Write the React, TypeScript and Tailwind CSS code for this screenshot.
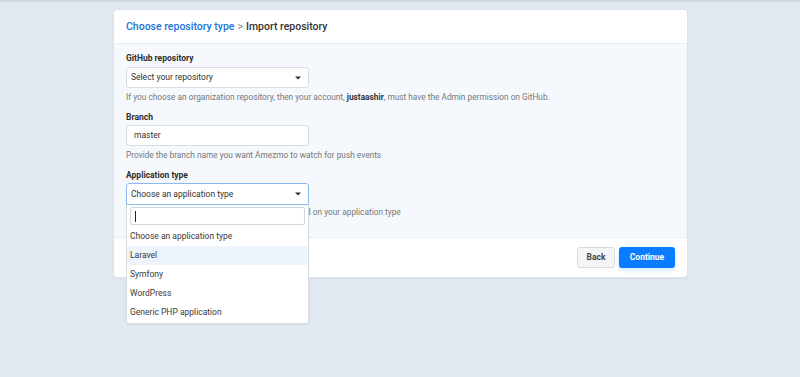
import { useState } from 'react';

const options = [
  'Choose an application type',
  'Laravel',
  'Symfony',
  'WordPress',
  'Generic PHP application',
];

function Caret() {
  return (
    <svg width="6" height="4" viewBox="0 0 6 4" className="shrink-0">
      <path d="M0 0.5h6L3 3.5z" fill="#333" />
    </svg>
  );
}

export default function App() {
  const [hovered] = useState('Laravel');

  return (
    <div className="min-h-[377px] bg-[#e2e8f0] font-['Roboto',sans-serif]">
      <div className="h-[2px] bg-[#d3d9e3]" />
      <div className="ml-[113px] mt-[7px] w-[575px] rounded-[4px] border border-[#dde3ea] bg-white shadow-[0_1px_2px_rgba(0,0,0,0.04)]">
        <div className="flex h-[34px] items-center border-b border-[#e8edf3] px-3 text-[10.5px]">
          <span className="font-medium text-[#1b73d9]">Choose repository type</span>
          <span className="mx-[3px] text-[#888]">&gt;</span>
          <span className="font-medium text-[#333]">Import repository</span>
        </div>

        <div className="bg-[#f5f9fd] px-3 pb-[19px] pt-[8px] text-[#333]">
          <label className="block text-[8.5px] font-bold leading-[12px] text-[#2d2d2d]">
            GitHub repository
          </label>
          <div className="mt-[3px] flex h-[21px] w-[183px] items-center justify-between rounded-[3px] border border-[#d8dde4] bg-white pl-[4px] pr-[7px] text-[8.5px] text-[#333]">
            <span>Select your repository</span>
            <Caret />
          </div>
          <p className="mt-[3px] text-[8.3px] leading-[12px] text-[#777]">
            If you choose an organization repository, then your account,{' '}
            <b className="text-[#333]">justaashir</b>, must have the Admin permission on GitHub.
          </p>

          <label className="mt-[8px] block text-[8.5px] font-bold leading-[12px] text-[#2d2d2d]">
            Branch
          </label>
          <div className="mt-[2px] flex h-[21px] w-[183px] items-center rounded-[3px] border border-[#d8dde4] bg-white pl-[7px] text-[8.5px] text-[#333]">
            master
          </div>
          <p className="mt-[3px] text-[8.3px] leading-[12px] text-[#777]">
            Provide the branch name you want Amezmo to watch for push events
          </p>

          <label className="mt-[8px] block text-[8.5px] font-bold leading-[12px] text-[#2d2d2d]">
            Application type
          </label>
          <div className="relative mt-[2px] w-[183px]">
            <div className="flex h-[22px] items-center justify-between rounded-t-[3px] border border-[#8db8ee] bg-white pl-[4px] pr-[7px] text-[8.5px] text-[#333]">
              <span>Choose an application type</span>
              <Caret />
            </div>
            <div className="absolute left-0 top-[22px] z-10 w-[183px] rounded-b-[3px] border border-t-0 border-[#d8dde4] bg-white pb-[1px] shadow-[0_1px_3px_rgba(0,0,0,0.05)]">
              <div className="px-[3px] pt-[2px]">
                <div className="flex h-[18px] items-center rounded-[2px] border border-[#d0d6dd] pl-[4px]">
                  <span className="h-[11px] w-px bg-[#222]" />
                </div>
              </div>
              <ul className="mt-[2px] text-[8.5px] text-[#3a3a3a]">
                {options.map((o) => (
                  <li
                    key={o}
                    className={`flex h-[19px] items-center pl-[3px] ${o === hovered ? 'bg-[#eef4fb]' : ''}`}
                  >
                    {o}
                  </li>
                ))}
              </ul>
            </div>
          </div>
          <p className="mt-[1px] text-[8.3px] leading-[12px] text-[#777]">
            Amezmo will configure your deploy process based on your application type
          </p>
        </div>

        <div className="flex h-[40px] items-center justify-end gap-[4px] border-t border-[#e8edf3] px-3">
          <button className="h-[21px] w-[38px] rounded-[3px] border border-[#d6dbe1] bg-[#f4f5f7] text-[8.5px] font-bold text-[#444]">
            Back
          </button>
          <button className="h-[21px] w-[56px] rounded-[3px] bg-[#0a7cff] text-[8.5px] font-bold text-white shadow-[0_2px_4px_rgba(10,124,255,0.2)]">
            Continue
          </button>
        </div>
      </div>
    </div>
  );
}
